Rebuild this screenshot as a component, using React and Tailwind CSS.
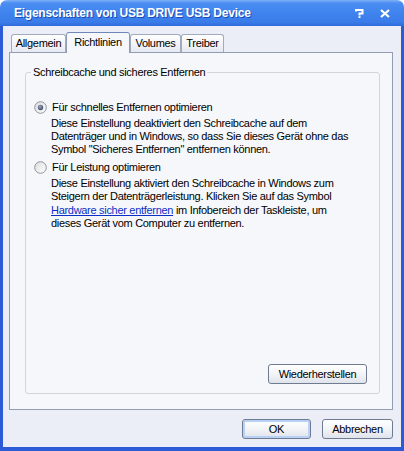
import React from 'react';

const font = "font-['Liberation_Sans',Arial,sans-serif]";

const Radio = ({ checked }) => (
  <svg width="13" height="13" viewBox="0 0 13 13" className="shrink-0">
    <defs>
      <linearGradient id={checked ? 'rg1' : 'rg2'} x1="0" y1="0" x2="1" y2="1">
        <stop offset="0" stopColor="#dcdcdc" />
        <stop offset="1" stopColor="#ffffff" />
      </linearGradient>
      <radialGradient id="dot" cx="0.4" cy="0.35" r="0.7">
        <stop offset="0" stopColor="#9aa4b8" />
        <stop offset="1" stopColor="#3d4a66" />
      </radialGradient>
    </defs>
    <circle cx="6.5" cy="6.5" r="5.8" fill={`url(#${checked ? 'rg1' : 'rg2'})`} stroke="#8d939e" strokeWidth="1" />
    {checked && <circle cx="6.5" cy="6.5" r="2.7" fill="url(#dot)" />}
  </svg>
);

const Tab = ({ label, width, active }) => (
  <div
    className={
      active
        ? `relative z-10 -mb-px flex h-[21px] items-start justify-center rounded-t-[3px] border border-b-0 border-[#8f9bb2] border-t-[#6f86b8] bg-[#f6f7fa] pt-[3px] ${width}`
        : `flex h-[18px] items-start justify-center rounded-t-[3px] border border-b-0 border-[#a2abbd] bg-gradient-to-b from-white to-[#e6e9f1] pt-[2px] ${width}`
    }
  >
    <span className="text-[11px] leading-[13px] tracking-[-0.3px] text-black">{label}</span>
  </div>
);

const Btn = ({ children, width, primary }) => (
  <button
    className={`flex h-[20px] items-center justify-center rounded-[3px] border border-[#6f7b91] bg-gradient-to-b from-white via-[#f3f4f7] to-[#dfe3eb] text-[11px] tracking-[-0.3px] text-black ${width} ${
      primary ? 'shadow-[inset_0_0_0_2px_#b9d1f5]' : ''
    }`}
  >
    {children}
  </button>
);

export default function App() {
  return (
    <div className={`h-[451px] w-[404px] bg-white ${font}`}>
      <div className="flex h-full flex-col overflow-hidden rounded-t-[7px]">
        {/* title bar */}
        <div className="flex h-[26px] shrink-0 items-center bg-[linear-gradient(to_bottom,#7fb2f8_0%,#4b8df1_12%,#3f83ee_50%,#3a7ce9_85%,#2f6bdb_100%)] pl-[14px] pr-[14px]">
          <span className="text-[12px] font-bold tracking-[-0.25px] text-white [text-shadow:1px_1px_0_#1b4bb5]">
            Eigenschaften von USB DRIVE USB Device
          </span>
          <div className="ml-auto flex items-center gap-[16px]">
            <svg width="9" height="9" viewBox="0 0 9 9">
              <path d="M1 2.5V1h6.5v3.5H4.5v2" fill="none" stroke="white" strokeWidth="2" />
              <rect x="3.5" y="7.2" width="2" height="1.8" fill="white" />
            </svg>
            <svg width="10" height="9" viewBox="0 0 10 9">
              <path d="M1 1l8 7M9 1l-8 7" stroke="white" strokeWidth="2.2" />
            </svg>
          </div>
        </div>

        {/* body */}
        <div className="flex flex-1 flex-col border-x-[3px] border-b-[4px] border-[#2b5bd7] bg-[#ebeef6] pl-[6px]">
          <div className="mt-[6px] w-[384px]">
            <div className="flex h-[20px] items-end pl-[2px]">
              <Tab label="Allgemein" width="w-[55px]" />
              <Tab label="Richtlinien" width="w-[64px]" active />
              <Tab label="Volumes" width="w-[51px]" />
              <Tab label="Treiber" width="w-[43px]" />
            </div>

            <div className="flex h-[358px] flex-col border border-[#939cb0] bg-[#f6f7fa] pb-[15px] pl-[15px] pr-[12px] pt-[13px]">
              <fieldset className="flex flex-1 flex-col rounded-[3px] border border-[#d2d5db] pb-[9px] pl-[8px] pr-[12px] pt-[21px]">
                <legend className="-ml-[3px] px-[2px] text-[11px] leading-[13px] tracking-[-0.3px] text-black">
                  Schreibcache und sicheres Entfernen
                </legend>

                <div className="text-[11px] leading-[13px] tracking-[-0.3px] text-black">
                  <div className="flex h-[14px] items-center gap-[5px]">
                    <Radio checked />
                    <span>Für schnelles Entfernen optimieren</span>
                  </div>
                  <p className="mt-[3px] whitespace-nowrap pl-[17px]">
                    Diese Einstellung deaktiviert den Schreibcache auf dem
                    <br />
                    Datenträger und in Windows, so dass Sie dieses Gerät ohne das
                    <br />
                    Symbol "Sicheres Entfernen" entfernen können.
                  </p>

                  <div className="mt-[4px] flex h-[14px] items-center gap-[5px]">
                    <Radio />
                    <span>Für Leistung optimieren</span>
                  </div>
                  <p className="mt-[3px] whitespace-nowrap pl-[17px] leading-[13.4px]">
                    Diese Einstellung aktiviert den Schreibcache in Windows zum
                    <br />
                    Steigern der Datenträgerleistung. Klicken Sie auf das Symbol
                    <br />
                    <span className="text-[#0b2fc7] underline">Hardware sicher entfernen</span> im Infobereich der Taskleiste, um
                    <br />
                    dieses Gerät vom Computer zu entfernen.
                  </p>
                </div>

                <div className="mt-auto flex justify-end">
                  <Btn width="w-[99px]">Wiederherstellen</Btn>
                </div>
              </fieldset>
            </div>

            <div className="mt-[9px] flex justify-end gap-[11px]">
              <Btn width="w-[69px]" primary>
                OK
              </Btn>
              <Btn width="w-[71px]">Abbrechen</Btn>
            </div>
          </div>
        </div>
      </div>
    </div>
  );
}
